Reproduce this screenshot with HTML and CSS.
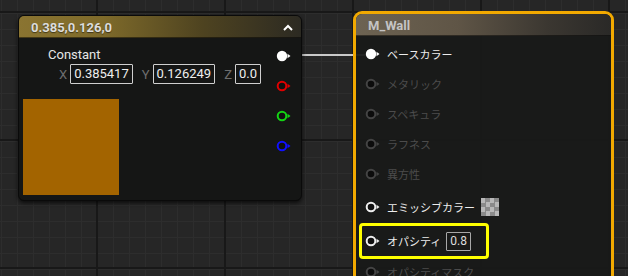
FILE: index.html
```html
<!DOCTYPE html>
<html lang="ja">
<head>
  <meta charset="UTF-8" />
  <title>M_Wall</title>
  <link rel="stylesheet" href="styles.css">
</head>
<body>
  <div class="graph">
    <div class="wire"></div>

    <!-- Constant3Vector ノード -->
    <div class="node const-node">
      <div class="node-head const-head">
        <span class="node-title">0.385,0.126,0</span>
        <svg class="caret" width="10" height="7" viewBox="0 0 10 7"><polyline points="1,6 5,2 9,6" fill="none" stroke="#fff" stroke-width="2"/></svg>
      </div>
      <div class="const-body">
        <div class="const-left">
          <div class="const-label">Constant</div>
          <div class="xyz">
            <span class="axis">X</span><span class="num-box">0.385417</span>
            <span class="axis">Y</span><span class="num-box">0.126249</span>
            <span class="axis">Z</span><span class="num-box">0.0</span>
          </div>
          <div class="swatch"></div>
        </div>
        <div class="out-pins">
          <div class="out-pin"><svg width="15" height="12" viewBox="0 0 15 12"><circle cx="6" cy="6" r="5.2" fill="#fff"/><polygon points="11.5,3.8 14.5,6 11.5,8.2" fill="#fff"/></svg></div>
          <div class="out-pin"><svg width="15" height="12" viewBox="0 0 15 12"><circle cx="6" cy="6" r="4.3" fill="#111" stroke="#e00000" stroke-width="2"/><polygon points="11.5,3.8 14.5,6 11.5,8.2" fill="#e00000"/></svg></div>
          <div class="out-pin"><svg width="15" height="12" viewBox="0 0 15 12"><circle cx="6" cy="6" r="4.3" fill="#111" stroke="#14d414" stroke-width="2"/><polygon points="11.5,3.8 14.5,6 11.5,8.2" fill="#14d414"/></svg></div>
          <div class="out-pin"><svg width="15" height="12" viewBox="0 0 15 12"><circle cx="6" cy="6" r="4.3" fill="#111" stroke="#1010ff" stroke-width="2"/><polygon points="11.5,3.8 14.5,6 11.5,8.2" fill="#1010ff"/></svg></div>
        </div>
      </div>
    </div>

    <!-- マテリアル結果ノード -->
    <div class="node mat-node">
      <div class="node-head mat-head">
        <span class="node-title mat-title">M_Wall</span>
      </div>
      <div class="mat-body">
        <div class="in-row">
          <svg class="pin" width="15" height="12" viewBox="0 0 15 12"><circle cx="6" cy="6" r="5.2" fill="#fff"/><polygon points="11.5,3.8 14.5,6 11.5,8.2" fill="#fff"/></svg>
          <span>ベースカラー</span>
        </div>
        <div class="in-row off">
          <svg class="pin" width="15" height="12" viewBox="0 0 15 12"><circle cx="6" cy="6" r="4.3" fill="#0c0c0c" stroke="#444" stroke-width="2"/><polygon points="11.5,3.8 14.5,6 11.5,8.2" fill="#444"/></svg>
          <span>メタリック</span>
        </div>
        <div class="in-row off">
          <svg class="pin" width="15" height="12" viewBox="0 0 15 12"><circle cx="6" cy="6" r="4.3" fill="#0c0c0c" stroke="#444" stroke-width="2"/><polygon points="11.5,3.8 14.5,6 11.5,8.2" fill="#444"/></svg>
          <span>スペキュラ</span>
        </div>
        <div class="in-row off">
          <svg class="pin" width="15" height="12" viewBox="0 0 15 12"><circle cx="6" cy="6" r="4.3" fill="#0c0c0c" stroke="#444" stroke-width="2"/><polygon points="11.5,3.8 14.5,6 11.5,8.2" fill="#444"/></svg>
          <span>ラフネス</span>
        </div>
        <div class="in-row off">
          <svg class="pin" width="15" height="12" viewBox="0 0 15 12"><circle cx="6" cy="6" r="4.3" fill="#0c0c0c" stroke="#444" stroke-width="2"/><polygon points="11.5,3.8 14.5,6 11.5,8.2" fill="#444"/></svg>
          <span>異方性</span>
        </div>
        <div class="in-row emissive">
          <svg class="pin" width="15" height="12" viewBox="0 0 15 12"><circle cx="6" cy="6" r="4.3" fill="#111" stroke="#eee" stroke-width="2"/><polygon points="11.5,3.8 14.5,6 11.5,8.2" fill="#eee"/></svg>
          <span>エミッシブカラー</span>
          <span class="checker"></span>
        </div>
        <div class="highlight">
          <div class="in-row">
            <svg class="pin" width="15" height="12" viewBox="0 0 15 12"><circle cx="6" cy="6" r="4.3" fill="#111" stroke="#eee" stroke-width="2"/><polygon points="11.5,3.8 14.5,6 11.5,8.2" fill="#eee"/></svg>
            <span>オパシティ</span>
            <span class="num-box small">0.8</span>
          </div>
        </div>
        <div class="in-row off mask">
          <svg class="pin" width="15" height="12" viewBox="0 0 15 12"><circle cx="6" cy="6" r="4.3" fill="#0c0c0c" stroke="#444" stroke-width="2"/><polygon points="11.5,3.8 14.5,6 11.5,8.2" fill="#444"/></svg>
          <span>オパシティマスク</span>
        </div>
      </div>
    </div>
  </div>
</body>
</html>
```

FILE: styles.css
```css
body {
  margin: 0;
  width: 628px;
  height: 276px;
  overflow: hidden;
  font-family: Roboto, "Noto Sans CJK JP", sans-serif;
  background: #262626;
}
.graph {
  position: relative;
  width: 628px;
  height: 276px;
  overflow: hidden;
  background-color: #262626;
  background-image:
    linear-gradient(90deg, #181818 2px, transparent 2px),
    linear-gradient(0deg, #181818 2px, transparent 2px),
    linear-gradient(90deg, #2d2d2d 1px, transparent 1px),
    linear-gradient(0deg, #2d2d2d 1px, transparent 1px);
  background-size: 128px 128px, 128px 128px, 16px 16px, 16px 16px;
  background-position: 96px 0, 0 13px, 1px 0, 0 14px;
}
.wire {
  position: absolute;
  left: 289px;
  top: 54px;
  width: 84px;
  height: 2px;
  background: #c9c9c9;
}
.node {
  position: absolute;
  box-sizing: border-box;
}
.node-head {
  height: 22px;
  display: flex;
  align-items: center;
  justify-content: space-between;
  box-shadow: inset 0 -1px 0 rgba(0,0,0,0.5);
}
.node-title {
  font-size: 13px;
  font-weight: bold;
  color: #dcdcdc;
}

/* 定数ノード */
.const-node {
  left: 18px;
  top: 15px;
  width: 284px;
  height: 186px;
  background: #151615;
  border: 1px solid #0a0a0a;
  border-radius: 6px;
  box-shadow: 0 2px 4px rgba(0,0,0,0.7);
  overflow: hidden;
}
.const-head {
  padding: 0 8px 0 12px;
  background: linear-gradient(90deg, #8a7431 0%, #7e6a2a 30%, #4e4320 65%, #2c2a22 100%);
}
.const-head .node-title {
  text-shadow: 0 1px 1px rgba(0,0,0,0.5);
}
.caret {
  display: block;
}
.const-body {
  display: flex;
  justify-content: space-between;
}
.const-left {
  padding-top: 9px;
}
.const-label {
  margin-left: 29px;
  font-size: 13px;
  line-height: 16px;
  color: #e6e6e6;
}
.xyz {
  display: flex;
  align-items: center;
  margin-left: 40px;
  margin-top: 1px;
  height: 20px;
}
.axis {
  font-size: 13px;
  color: #6e6e6e;
  margin-right: 3px;
}
.num-box {
  box-sizing: border-box;
  height: 20px;
  line-height: 18px;
  padding: 0 3px;
  border: 1px solid #cfcfcf;
  border-radius: 1px;
  font-size: 13px;
  color: #eeeeee;
  margin-right: 9px;
}
.swatch {
  margin: 15px 0 0 4px;
  width: 96px;
  height: 96px;
  background: #a36400;
}
.out-pins {
  padding: 3px 10px 0 0;
}
.out-pin {
  height: 30px;
  display: flex;
  align-items: center;
}
.out-pin svg {
  display: block;
}

/* マテリアルノード */
.mat-node {
  left: 353px;
  top: 11px;
  width: 261px;
  height: 290px;
  border: 3px solid #f2a900;
  border-radius: 9px;
  background: rgba(24,25,24,0.94);
  overflow: hidden;
}
.mat-head {
  padding-left: 12px;
  background: linear-gradient(90deg, #6d6352 0%, #5f5546 40%, #3b3731 75%, #2a2927 100%);
}
.mat-title {
  color: #c4c4c4;
}
.mat-body {
  padding-top: 3px;
}
.in-row {
  height: 30px;
  display: flex;
  align-items: center;
  padding-left: 9px;
  font-size: 11px;
  color: #ececec;
}
.in-row .pin {
  display: block;
  margin-right: 7px;
}
.in-row.off {
  color: #4c4c4c;
}
.in-row.emissive {
  margin-top: 3px;
}
.checker {
  width: 18px;
  height: 18px;
  margin-left: 6px;
  background-color: #b8b8b8;
  background-image: conic-gradient(#8a8a8a 25%, transparent 25% 50%, #8a8a8a 50% 75%, transparent 75%);
  background-size: 9px 9px;
}
.highlight {
  box-sizing: border-box;
  width: 130px;
  height: 36px;
  margin: 1px 0 0 3px;
  border: 3px solid #ffff00;
  border-radius: 4px;
  display: flex;
  align-items: center;
}
.highlight .in-row {
  padding-left: 3px;
}
.num-box.small {
  height: 19px;
  line-height: 17px;
  margin-left: 5px;
  font-size: 12px;
  border-color: #a8a8a8;
  color: #dddddd;
}
.in-row.mask {
  height: 26px;
}
```
